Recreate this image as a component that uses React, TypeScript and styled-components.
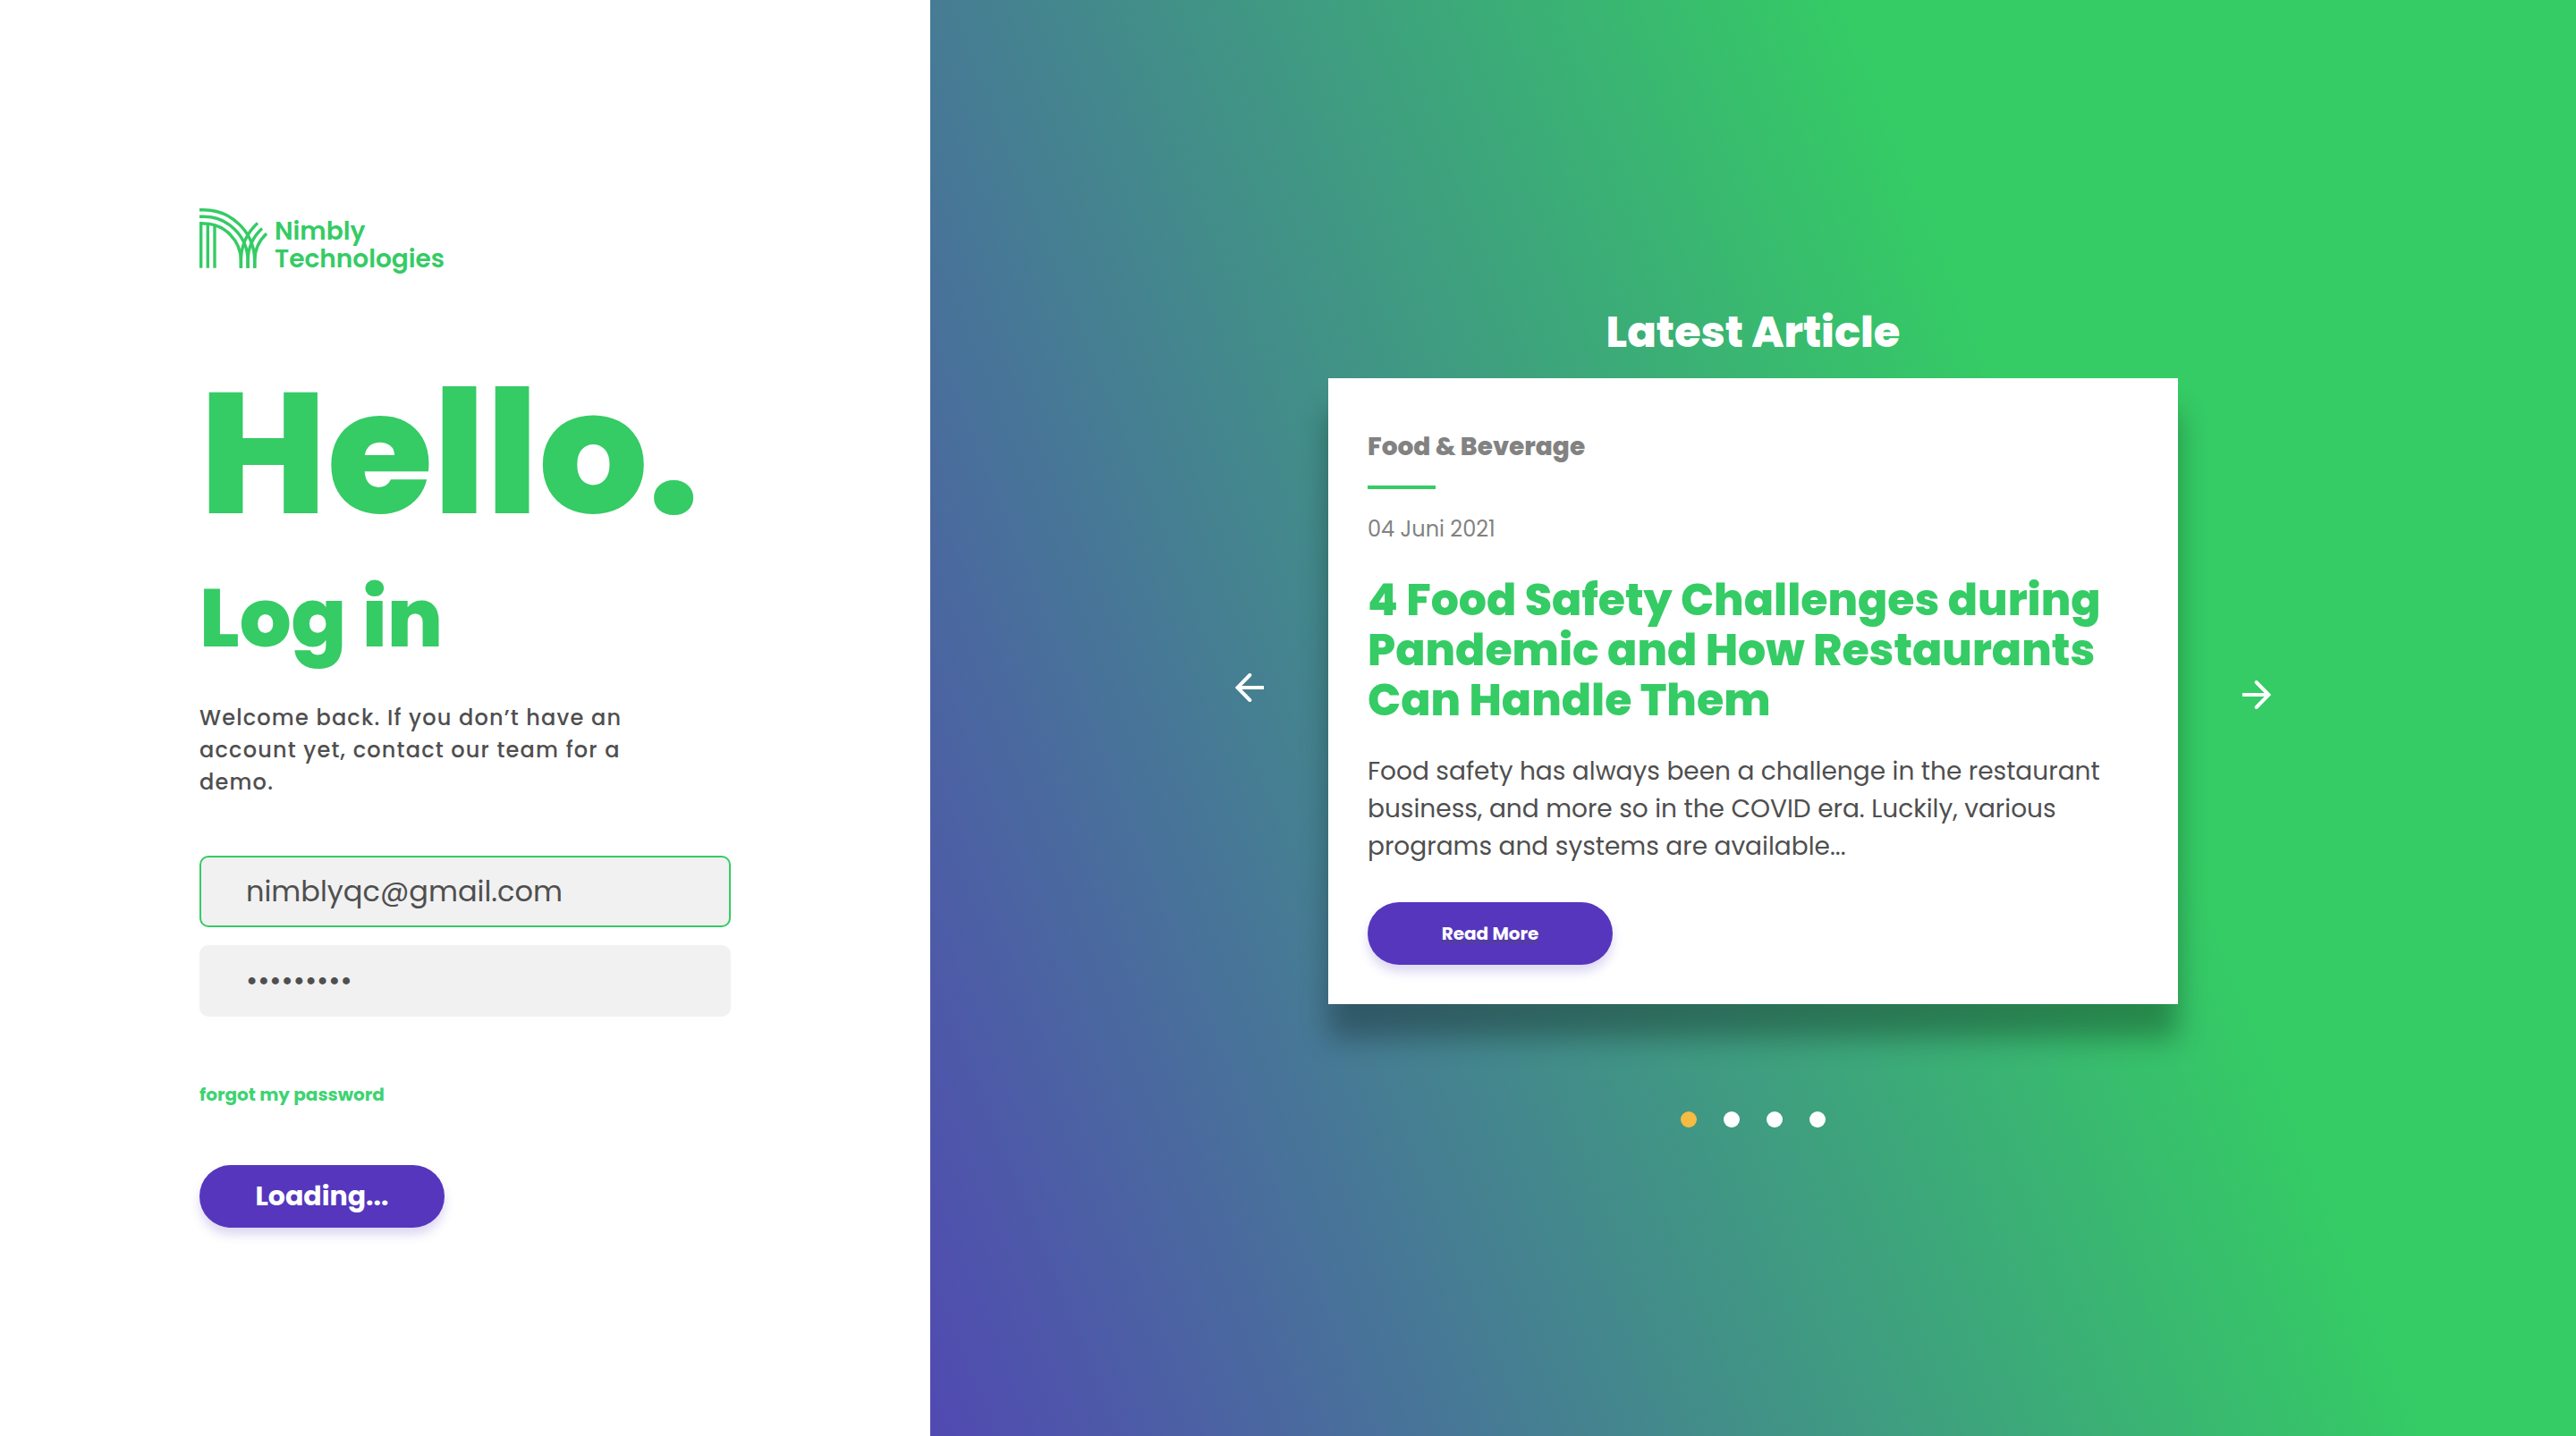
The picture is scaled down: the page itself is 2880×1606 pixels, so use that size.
import React, { useState } from "react";
import styled, { createGlobalStyle, css } from "styled-components";

const green = "#35cb65";
const purple = "#5536bd";
const ink = "#4f4f4f";
const grey = "#828282";

const GlobalStyle = createGlobalStyle`
  *, *::before, *::after { box-sizing: border-box; }
  body {
    margin: 0;
    color: ${ink};
    font-family: Poppins, Inter, "Open Sans", sans-serif;
  }
  h1, h2, h3, p { margin: 0; }
  button, input { font-family: inherit; }
`;

const Page = styled.main`
  display: grid;
  grid-template-columns: 13fr 23fr;
  min-height: 100vh;
`;

const LoginPanel = styled.section`
  display: flex;
  align-items: center;
  justify-content: center;
  background: #fff;
`;

const LoginForm = styled.form`
  display: flex;
  flex-direction: column;
  align-items: flex-start;
  width: 594px;
`;

const Brand = styled.div`
  display: flex;
  gap: 6px;
  min-height: 74px;
  margin-bottom: 105px;
  color: ${green};
`;

const BrandMark = styled.svg`
  width: 78px;
  height: 68px;
  fill: none;
  stroke: currentColor;
  stroke-width: 3.4;
`;

const BrandName = styled.div`
  padding-top: 10px;
  font-size: 28px;
  font-weight: 600;
  line-height: 31px;
`;

const Greeting = styled.h1`
  margin-bottom: 41px;
  color: ${green};
  font-size: 192px;
  font-weight: 800;
  line-height: 190px;
`;

const FormTitle = styled.h2`
  margin-bottom: 46px;
  color: ${green};
  font-size: 91px;
  font-weight: 800;
  line-height: 96px;
`;

const Intro = styled.p`
  max-width: 520px;
  margin-bottom: 64px;
  font-size: 24px;
  font-weight: 500;
  letter-spacing: 0.05em;
  line-height: 36px;
`;

const Fields = styled.div`
  display: flex;
  flex-direction: column;
  gap: 20px;
  width: 100%;
  margin-bottom: 75px;
`;

const TextField = styled.input<{ $active?: boolean }>`
  width: 100%;
  height: 80px;
  padding: 0 50px;
  border: 2px solid ${(p) => (p.$active ? green : "transparent")};
  border-radius: 10px;
  outline: none;
  background: #f1f1f1;
  color: ${ink};
  font-size: 32px;
`;

const ForgotLink = styled.a`
  margin-bottom: 67px;
  color: #3ed373;
  font-size: 20px;
  font-weight: 700;
  line-height: 24px;
  text-decoration: none;
`;

const pill = css`
  display: flex;
  align-items: center;
  justify-content: center;
  width: 274px;
  height: 70px;
  border: 0;
  border-radius: 35px;
  background: ${purple};
  box-shadow: 0 8px 12px rgba(85, 54, 189, 0.2);
  color: #fff;
`;

const SubmitButton = styled.button`
  ${pill}
  font-size: 30px;
  font-weight: 700;
`;

const ArticlePanel = styled.section`
  display: flex;
  flex-direction: column;
  align-items: center;
  justify-content: center;
  background: linear-gradient(68deg, ${purple} -10%, ${green} 67%);
`;

const PanelTitle = styled.h2`
  margin-bottom: 24px;
  color: #fff;
  font-size: 48px;
  font-weight: 800;
  line-height: 54px;
`;

const Carousel = styled.div`
  display: flex;
  align-items: center;
  justify-content: center;
  gap: 72px;
  width: 100%;
  margin-bottom: 120px;
`;

const ArrowButton = styled.button<{ $next?: boolean }>`
  flex: none;
  width: 32px;
  height: 40px;
  padding: 0;
  border: 0;
  background: none;
  color: #fff;
  transform: ${(p) => (p.$next ? "rotate(180deg)" : "none")};

  svg {
    display: block;
    fill: none;
    stroke: currentColor;
    stroke-width: 4;
  }
`;

const Card = styled.article`
  display: flex;
  flex: 0 1 950px;
  flex-direction: column;
  align-items: flex-start;
  padding: 59px 44px 44px;
  background: #fff;
  box-shadow: 0 38px 30px rgba(0, 0, 0, 0.3);
`;

const Category = styled.p`
  margin-bottom: 25px;
  color: ${grey};
  font-size: 28px;
  font-weight: 800;
  line-height: 36px;
`;

const Rule = styled.span`
  width: 76px;
  height: 4px;
  margin-bottom: 27px;
  background: ${green};
`;

const PublishDate = styled.time`
  margin-bottom: 33px;
  color: ${grey};
  font-size: 24px;
  line-height: 36px;
`;

const ArticleTitle = styled.h3`
  margin-bottom: 31px;
  color: ${green};
  font-size: 49px;
  font-weight: 800;
  line-height: 56px;
`;

const Summary = styled.p`
  margin-bottom: 41px;
  font-size: 28px;
  line-height: 42px;
`;

const ReadMoreLink = styled.a`
  ${pill}
  font-size: 20px;
  font-weight: 700;
  text-decoration: underline 1px ${ink};
  text-decoration-skip-ink: none;
  text-underline-offset: 2px;
`;

const Dots = styled.div`
  display: flex;
  gap: 30px;
`;

const Dot = styled.button<{ $active: boolean }>`
  width: 18px;
  height: 18px;
  padding: 0;
  border: 0;
  border-radius: 50%;
  background: ${(p) => (p.$active ? "#f5bb42" : "#fff")};
`;

function BrandLogo() {
  return (
    <Brand>
      <BrandMark viewBox="0 0 78 68" aria-hidden="true">
        <path d="M1.7 15V66.8M9.3 17V66.8M17 18.5V66.8" />
        <path d="M0 1.7H4.7A57 57 0 0 1 61.7 58.7V66.8" />
        <path d="M0 9.3H4.7A49.4 49.4 0 0 1 54.1 58.7V66.8" />
        <path d="M0 17H4.7A41.7 41.7 0 0 1 46.4 58.7V66.8" />
        <path d="M46.4 66.8V58.7A57 57 0 0 1 65 16.6" />
        <path d="M54.1 66.8V58.7A49.4 49.4 0 0 1 70 22.4" />
        <path d="M61.7 66.8V58.7A41.7 41.7 0 0 1 75 28.2" />
      </BrandMark>
      <BrandName>
        Nimbly
        <br />
        Technologies
      </BrandName>
    </Brand>
  );
}

function Arrow() {
  return (
    <svg width="32" height="40" viewBox="0 0 32 40" aria-hidden="true">
      <path d="M4 16H32" />
      <path d="M16.3 2L2.5 16L16.3 30" strokeLinecap="round" />
    </svg>
  );
}

export default function App() {
  const [email, setEmail] = useState("nimblyqc@gmail.com");
  const [password, setPassword] = useState("nimblyqc1");
  const [slide, setSlide] = useState(0);

  return (
    <>
      <GlobalStyle />
      <Page>
        <LoginPanel>
          <LoginForm onSubmit={(e) => e.preventDefault()}>
            <BrandLogo />
            <Greeting>Hello.</Greeting>
            <FormTitle>Log in</FormTitle>
            <Intro>
              Welcome back. If you don’t have an account yet, contact our team
              for a demo.
            </Intro>
            <Fields>
              <TextField
                $active
                type="email"
                aria-label="Email"
                value={email}
                onChange={(e) => setEmail(e.target.value)}
              />
              <TextField
                type="password"
                aria-label="Password"
                value={password}
                onChange={(e) => setPassword(e.target.value)}
              />
            </Fields>
            <ForgotLink href="#forgot">forgot my password</ForgotLink>
            <SubmitButton type="submit">Loading...</SubmitButton>
          </LoginForm>
        </LoginPanel>

        <ArticlePanel>
          <PanelTitle>Latest Article</PanelTitle>
          <Carousel>
            <ArrowButton
              type="button"
              aria-label="Previous article"
              onClick={() => setSlide((slide + 3) % 4)}
            >
              <Arrow />
            </ArrowButton>
            <Card>
              <Category>Food &amp; Beverage</Category>
              <Rule />
              <PublishDate dateTime="2021-06-04">04 Juni 2021</PublishDate>
              <ArticleTitle>
                4 Food Safety Challenges during Pandemic and How Restaurants Can
                Handle Them
              </ArticleTitle>
              <Summary>
                Food safety has always been a challenge in the restaurant
                business, and more so in the COVID era. Luckily, various
                programs and systems are available...
              </Summary>
              <ReadMoreLink href="#article">Read More</ReadMoreLink>
            </Card>
            <ArrowButton
              $next
              type="button"
              aria-label="Next article"
              onClick={() => setSlide((slide + 1) % 4)}
            >
              <Arrow />
            </ArrowButton>
          </Carousel>
          <Dots>
            {[0, 1, 2, 3].map((n) => (
              <Dot
                key={n}
                type="button"
                aria-label={`Article ${n + 1}`}
                $active={n === slide}
                onClick={() => setSlide(n)}
              />
            ))}
          </Dots>
        </ArticlePanel>
      </Page>
    </>
  );
}
